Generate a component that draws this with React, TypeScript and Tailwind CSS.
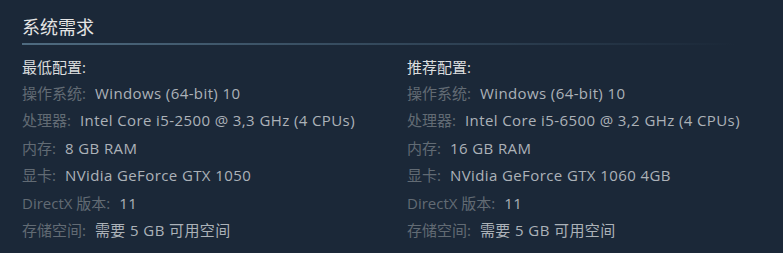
import React from "react";

const min = [
  ["操作系统:", "Windows (64-bit) 10"],
  ["处理器:", "Intel Core i5-2500 @ 3,3 GHz (4 CPUs)"],
  ["内存:", "8 GB RAM"],
  ["显卡:", "NVidia GeForce GTX 1050"],
  ["DirectX 版本:", "11"],
  ["存储空间:", "需要 5 GB 可用空间"],
];
const rec = [
  ["操作系统:", "Windows (64-bit) 10"],
  ["处理器:", "Intel Core i5-6500 @ 3,2 GHz (4 CPUs)"],
  ["内存:", "16 GB RAM"],
  ["显卡:", "NVidia GeForce GTX 1060 4GB"],
  ["DirectX 版本:", "11"],
  ["存储空间:", "需要 5 GB 可用空间"],
];

function Col({ title, rows }: { title: string; rows: string[][] }) {
  return (
    <div className="flex flex-col">
      <div className="text-[15px] leading-[26px] text-[#dcdedf] h-[26px]">{title}</div>
      {rows.map(([k, v]) => (
        <div key={k} className="text-[15px] leading-[27.5px] h-[27.5px] whitespace-nowrap">
          <span className="text-[#626b74]">{k}</span>
          <span className="text-[#acb2b8] ml-[9px] tracking-[0.4px]">{v}</span>
        </div>
      ))}
    </div>
  );
}

export default function App() {
  return (
    <div
      className="w-[783px] h-[253px] bg-[#1b2838] overflow-hidden pl-[22px] pt-[14px]"
      style={{ fontFamily: '"Open Sans", "Noto Sans CJK SC", sans-serif' }}
    >
      <div className="text-[18px] leading-[26px] text-[#e5e5e5]">系统需求</div>
      <div className="h-[2px] w-[714px] mt-[3px] bg-gradient-to-r from-[#4f6b80] via-[#34495c] to-transparent" />
      <div className="grid grid-cols-[385px_1fr] mt-[8.5px]">
        <Col title="最低配置:" rows={min} />
        <Col title="推荐配置:" rows={rec} />
      </div>
    </div>
  );
}
